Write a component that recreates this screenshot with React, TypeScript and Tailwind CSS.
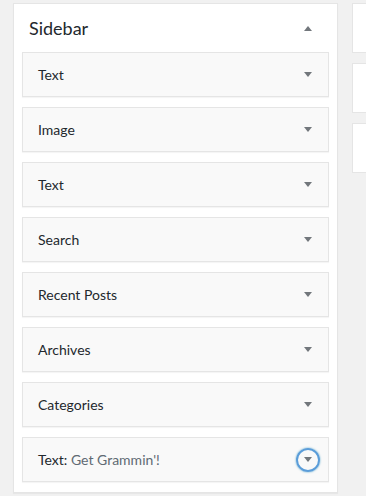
const widgets: { title: string; subtitle?: string; focused?: boolean }[] = [
  { title: "Text" },
  { title: "Image" },
  { title: "Text" },
  { title: "Search" },
  { title: "Recent Posts" },
  { title: "Archives" },
  { title: "Categories" },
  { title: "Text", subtitle: "Get Grammin'!", focused: true },
];

function Arrow({ up = false }: { up?: boolean }) {
  return (
    <svg width="8" height="5" viewBox="0 0 8 5" className="block">
      {up ? <path d="M0 5 L4 0 L8 5 Z" fill="#72777c" /> : <path d="M0 0 L8 0 L4 5 Z" fill="#72777c" />}
    </svg>
  );
}

function WidgetRow({ title, subtitle, focused }: { title: string; subtitle?: string; focused?: boolean }) {
  return (
    <div className="flex h-[45px] items-center justify-between border border-[#e5e5e5] bg-[#f9f9f9] pl-[15px] pr-[8px] shadow-[0_1px_1px_rgba(0,0,0,0.04)]">
      <span className="text-[14px] text-[#23282d]">
        {title}
        {subtitle ? (
          <>
            : <span className="text-[#606a73]">{subtitle}</span>
          </>
        ) : null}
      </span>
      <span
        className={
          focused
            ? "flex h-[24px] w-[24px] items-center justify-center rounded-full border-2 border-[#5b9dd9] shadow-[0_0_2px_rgba(30,140,190,0.8)]"
            : "flex h-[24px] w-[24px] items-center justify-center"
        }
      >
        <Arrow />
      </span>
    </div>
  );
}

export default function App() {
  return (
    <div className="flex h-[496px] w-[366px] gap-[14px] overflow-hidden bg-[#f1f1f1] pl-[13px] pt-[3px] font-['Lato',sans-serif]">
      <div className="w-[325px] shrink-0 self-start border border-[#e5e5e5] bg-white px-[8px] pb-[10px] shadow-[0_1px_1px_rgba(0,0,0,0.04)]">
        <div className="flex h-[48px] items-center justify-between pl-[7px] pr-[9px]">
          <h2 className="text-[18px] leading-none text-[#23282d]">Sidebar</h2>
          <span className="flex h-[24px] w-[24px] items-center justify-center">
            <Arrow up />
          </span>
        </div>
        <div className="flex flex-col gap-[10px]">
          {widgets.map((w, i) => (
            <WidgetRow key={i} title={w.title} subtitle={w.subtitle} focused={w.focused} />
          ))}
        </div>
      </div>
      <div className="flex w-[40px] shrink-0 flex-col gap-[10px]">
        <div className="h-[50px] border border-[#e5e5e5] bg-white" />
        <div className="h-[50px] border border-[#e5e5e5] bg-white" />
        <div className="h-[50px] border border-[#e5e5e5] bg-white" />
      </div>
    </div>
  );
}
